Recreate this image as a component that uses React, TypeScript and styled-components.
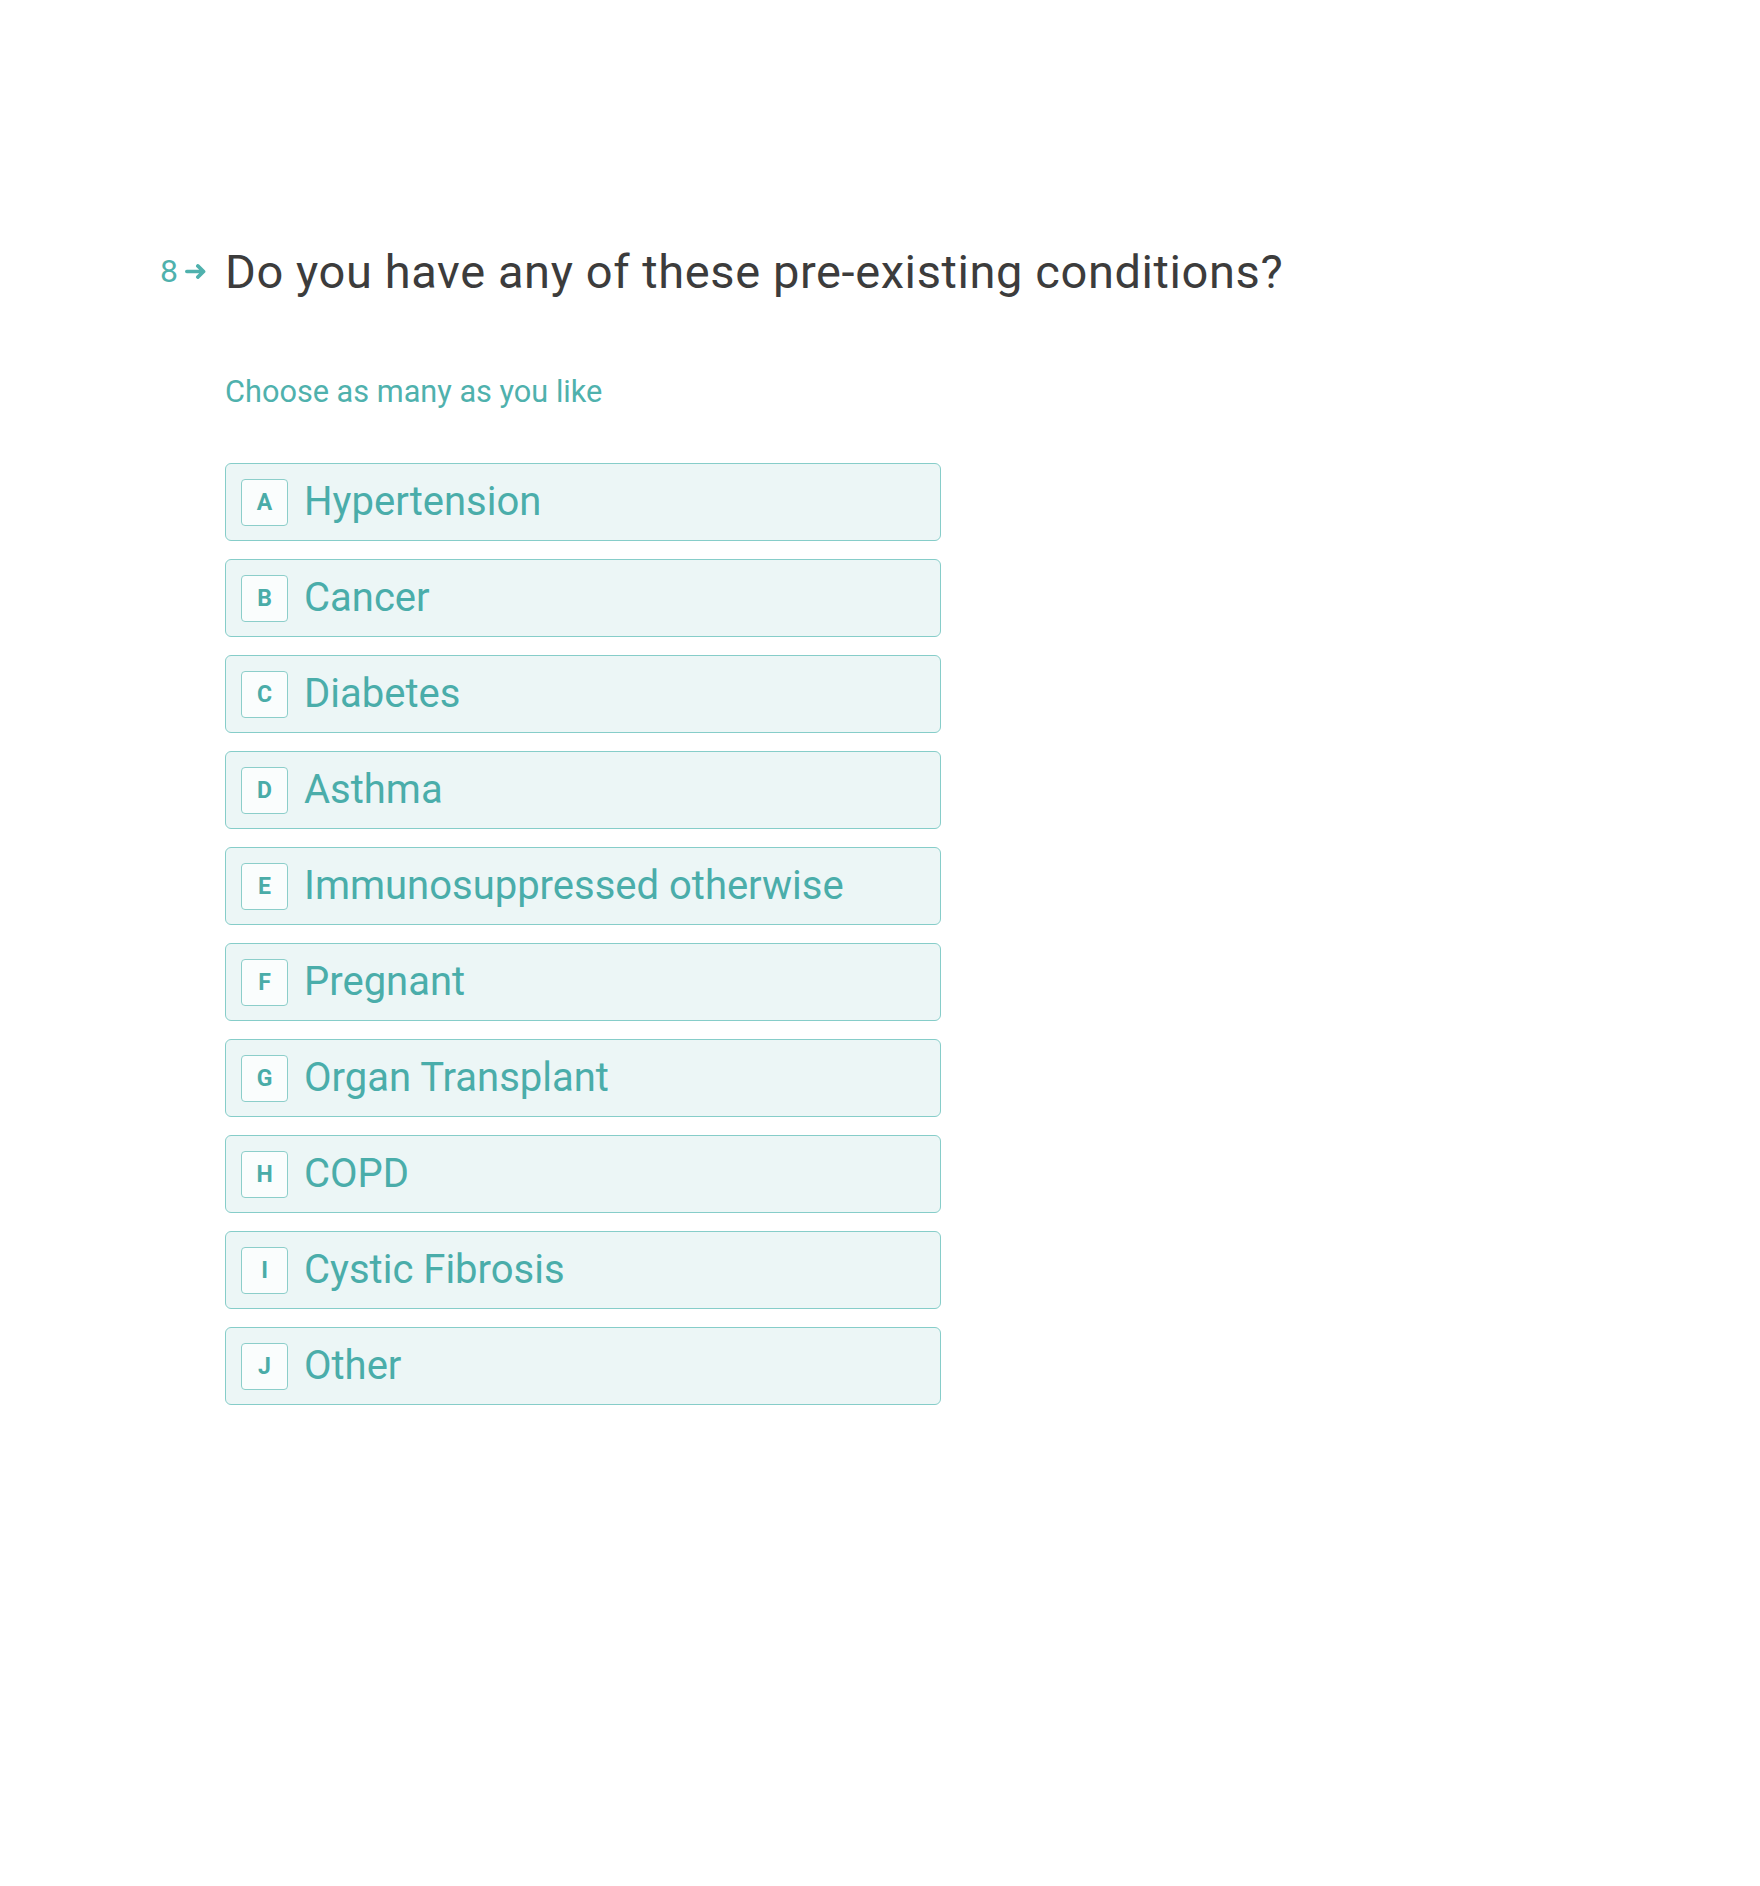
import styled, { createGlobalStyle } from 'styled-components';

const OPTIONS = [
  'Hypertension',
  'Cancer',
  'Diabetes',
  'Asthma',
  'Immunosuppressed otherwise',
  'Pregnant',
  'Organ Transplant',
  'COPD',
  'Cystic Fibrosis',
  'Other',
];

const KEYS = 'ABCDEFGHIJ';

const GlobalStyle = createGlobalStyle`
  body {
    margin: 0;
    background: #ffffff;
    font-family: Roboto, "Liberation Sans", sans-serif;
  }
`;

const App = () => {
  return (
    <Page>
      <GlobalStyle />
      <Question>
        <Counter>
          <Num>8</Num>
          <svg width="22" height="15" viewBox="0 0 22 15" fill="none">
            <path
              d="M1.8 7.5h16.5M12.8 1.9l5.8 5.6-5.8 5.6"
              stroke="#4fb1ad"
              strokeWidth="3.6"
              strokeLinecap="round"
              strokeLinejoin="round"
            />
          </svg>
        </Counter>
        <Body>
          <Title>Do you have any of these pre-existing conditions?</Title>
          <Hint>Choose as many as you like</Hint>
          <List>
            {OPTIONS.map((label, i) => (
              <Option key={label}>
                <KeyBox>{KEYS[i]}</KeyBox>
                <Label>{label}</Label>
              </Option>
            ))}
          </List>
        </Body>
      </Question>
    </Page>
  );
};

export default App;

const Page = styled.div`
  min-height: 1886px;
  padding: 244px 0 0 160px;
  box-sizing: border-box;
`;

const Question = styled.div`
  display: flex;
  align-items: flex-start;
`;

const Counter = styled.div`
  width: 65px;
  display: flex;
  align-items: center;
  gap: 7px;
  padding-top: 11px;
`;

const Num = styled.span`
  font-size: 32px;
  line-height: 1;
  color: #4fb1ad;
`;

const Body = styled.div`
  display: flex;
  flex-direction: column;
`;

const Title = styled.h1`
  margin: 0;
  font-size: 47px;
  font-weight: 400;
  line-height: 1.2;
  letter-spacing: 0.6px;
  color: #3c3c3c;
  white-space: nowrap;
`;

const Hint = styled.p`
  margin: 74px 0 0;
  font-size: 30.7px;
  line-height: 1.2;
  color: #4fb1ad;
`;

const List = styled.div`
  margin-top: 52px;
  display: flex;
  flex-direction: column;
  gap: 18px;
  width: 716px;
`;

const Option = styled.div`
  height: 78px;
  box-sizing: border-box;
  display: flex;
  align-items: center;
  padding-left: 15px;
  background: #ecf6f6;
  border: 1.5px solid #86cdc9;
  border-radius: 6px;
  cursor: pointer;
`;

const KeyBox = styled.div`
  width: 47px;
  height: 47px;
  box-sizing: border-box;
  display: flex;
  align-items: center;
  justify-content: center;
  background: #fafdfd;
  border: 1.5px solid #8cceca;
  border-radius: 4px;
  font-size: 23px;
  font-weight: 700;
  color: #4aaca8;
`;

const Label = styled.span`
  margin-left: 16px;
  font-size: 40px;
  line-height: 1;
  color: #4aadaa;
`;
